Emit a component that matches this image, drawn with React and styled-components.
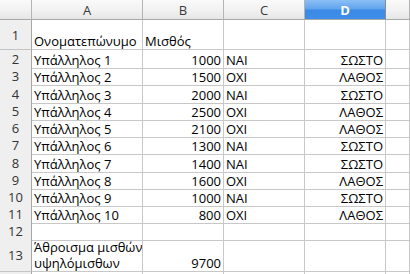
import React from "react";
import styled, { createGlobalStyle, css } from "styled-components";

const Global = createGlobalStyle`
  html, body { margin: 0; padding: 0; background: #ffffff; }
  body { overflow: hidden; }
`;

const COLS = "32px 111px 81px 81px 81px 1fr";

const Sheet = styled.div`
  width: 410px;
  height: 274px;
  overflow: hidden;
  font-family: "Open Sans", "Liberation Sans", sans-serif;
  font-size: 13px;
  color: #000;
  background: #fff;
`;

const Row = styled.div`
  display: grid;
  grid-template-columns: ${COLS};
  height: ${(p) => p.$h}px;
`;

const HeadCell = styled.div`
  box-sizing: border-box;
  border-right: 1px solid #b4b4b4;
  border-bottom: 1px solid #a8a8a8;
  background: linear-gradient(#fafafa, #f2f2f2 50%, #e6e6e6);
  color: #3a3a3a;
  display: flex;
  align-items: center;
  justify-content: center;
  font-size: 13px;
  ${(p) =>
    p.$active &&
    css`
      background: linear-gradient(#8cc0f6, #5fa3ee 48%, #3a8ae6 52%, #3f8fe9);
      color: #fff;
      font-weight: bold;
      border-right-color: #8a8a8a;
    `}
`;

const RowHead = styled.div`
  box-sizing: border-box;
  border-right: 1px solid #a8a8a8;
  border-bottom: 1px solid #c4c4c4;
  background: #efefef;
  color: #333;
  display: flex;
  align-items: center;
  justify-content: center;
  font-size: 13px;
`;

const Cell = styled.div`
  box-sizing: border-box;
  border-right: 1px solid #c8c8c8;
  border-bottom: 1px solid #c8c8c8;
  padding: 0 2px;
  display: flex;
  flex-direction: column;
  justify-content: flex-end;
  align-items: ${(p) => (p.$right ? "flex-end" : "flex-start")};
  line-height: 16px;
  white-space: nowrap;
  overflow: hidden;
`;

const data = [
  ["Υπάλληλος 1", 1000, "ΝΑΙ", "ΣΩΣΤΟ"],
  ["Υπάλληλος 2", 1500, "ΟΧΙ", "ΛΑΘΟΣ"],
  ["Υπάλληλος 3", 2000, "ΝΑΙ", "ΣΩΣΤΟ"],
  ["Υπάλληλος 4", 2500, "ΟΧΙ", "ΛΑΘΟΣ"],
  ["Υπάλληλος 5", 2100, "ΟΧΙ", "ΛΑΘΟΣ"],
  ["Υπάλληλος 6", 1300, "ΝΑΙ", "ΣΩΣΤΟ"],
  ["Υπάλληλος 7", 1400, "ΝΑΙ", "ΣΩΣΤΟ"],
  ["Υπάλληλος 8", 1600, "ΟΧΙ", "ΛΑΘΟΣ"],
  ["Υπάλληλος 9", 1000, "ΝΑΙ", "ΣΩΣΤΟ"],
  ["Υπάλληλος 10", 800, "ΟΧΙ", "ΛΑΘΟΣ"],
];

const bodyHeights = [17, 18, 17, 17, 17, 18, 17, 17, 17, 17];

function DataRow({ n, h, a, b, c, d, leftB }) {
  return (
    <Row $h={h}>
      <RowHead>{n}</RowHead>
      <Cell>{a}</Cell>
      <Cell $right={!leftB}>{b}</Cell>
      <Cell>{c}</Cell>
      <Cell $right>{d}</Cell>
      <Cell />
    </Row>
  );
}

export default function App() {
  return (
    <Sheet>
      <Global />
      <Row $h={20}>
        <HeadCell />
        <HeadCell>A</HeadCell>
        <HeadCell>B</HeadCell>
        <HeadCell>C</HeadCell>
        <HeadCell $active>D</HeadCell>
        <HeadCell />
      </Row>
      <DataRow n={1} h={30} a="Ονοματεπώνυμο" b="Μισθός" leftB />
      {data.map((r, i) => (
        <DataRow key={i} n={i + 2} h={bodyHeights[i]} a={r[0]} b={r[1]} c={r[2]} d={r[3]} />
      ))}
      <DataRow n={12} h={17} />
      <DataRow
        n={13}
        h={33}
        a={
          <>
            <span>Άθροισμα μισθών</span>
            <span>υψηλόμισθων</span>
          </>
        }
        b={9700}
      />
      <DataRow n={14} h={17} />
    </Sheet>
  );
}
